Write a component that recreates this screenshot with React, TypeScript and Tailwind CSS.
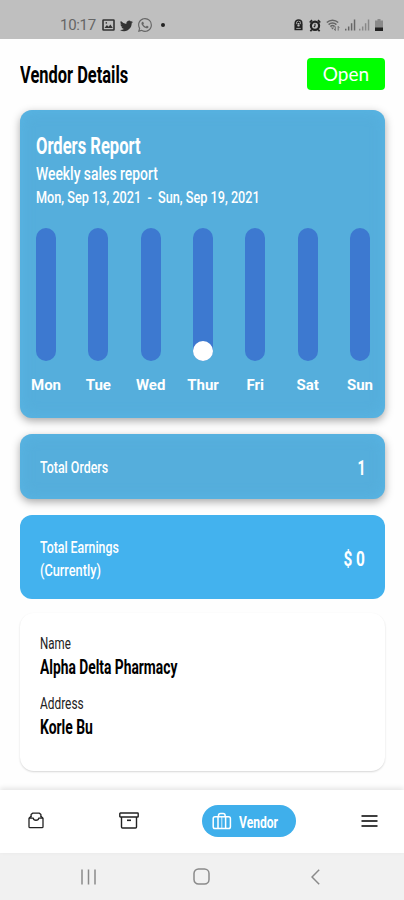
import type { ReactNode } from "react";
import { BsTwitter, BsWhatsapp } from "react-icons/bs";

const days = [
  { label: "Mon", orders: 0 },
  { label: "Tue", orders: 0 },
  { label: "Wed", orders: 0 },
  { label: "Thur", orders: 1 },
  { label: "Fri", orders: 0 },
  { label: "Sat", orders: 0 },
  { label: "Sun", orders: 0 },
];

// Roboto squeezed horizontally to get a narrow display face
function Narrow({ children, className }: { children: ReactNode; className: string }) {
  return <span className={`block w-max whitespace-pre ${className}`}>{children}</span>;
}

function SignalIcon({ className }: { className: string }) {
  return (
    <svg width="11" height="12" viewBox="0 0 12 12" className={className} fill="currentColor">
      <path d="M0 10h1.6v2H0zM3.2 7.5h1.6V12H3.2zM6.4 4H8v8H6.4zM9.6 0h1.6v12H9.6z" />
    </svg>
  );
}

function StatusBar() {
  return (
    <header className="flex h-[39px] items-center justify-between bg-[#bfbfbf] pt-[11px] pr-[21px] pl-[60px] text-[#333]">
      <div className="flex items-center">
        <span className="w-[42px] text-[15px] tracking-[-0.3px] text-[#666]">10:17</span>
        <svg width="13" height="12" viewBox="0 0 13 12" fill="none" stroke="currentColor">
          <rect x="1" y="1" width="11" height="10" rx="0.5" strokeWidth="1.6" />
          <path d="M2.5 9l2.4-3 1.7 1.8L8.4 5.5 10.8 9z" fill="currentColor" stroke="none" />
          <circle cx="4.3" cy="3.9" r="0.8" fill="currentColor" stroke="none" />
        </svg>
        <BsTwitter className="ml-[5px]" size={13} />
        <BsWhatsapp className="ml-[5px] text-[#666]" size={14} />
        <span className="ml-[9px] size-1 rounded-full bg-[#222]" />
      </div>
      <div className="flex items-center">
        <svg width="9" height="12" viewBox="0 0 10 13" fill="none" stroke="#222">
          <path d="M1.4 6V4.2a3.6 3.2 0 0 1 7.2 0V6" strokeWidth="1.7" />
          <path d="M0.5 5.5h9v6.8h-9z" fill="#222" stroke="none" />
          <path d="M3 4.8L5 3l2 1.8" strokeWidth="1.3" />
          <circle cx="5" cy="7" r="1.3" fill="#bfbfbf" stroke="none" />
          <path d="M2.5 10.3h5" stroke="#bfbfbf" strokeWidth="0.9" />
        </svg>
        <svg className="ml-1.5" width="12" height="13" viewBox="0 0 12 13" fill="none" stroke="#222">
          <circle cx="6" cy="6.8" r="4.1" strokeWidth="2.2" />
          <path d="M0.8 3.5L3 1.2M11.2 3.5L9 1.2M2.8 10.5l-1.4 1.7M9.2 10.5l1.4 1.7" strokeWidth="1.8" />
          <path d="M6 4.8v2.2L4.8 8" strokeWidth="1.1" />
        </svg>
        <svg className="ml-[5px]" width="14" height="12" viewBox="0 0 14 12" fill="none" stroke="#666">
          <path d="M0.8 3.5a8.2 8.2 0 0 1 11.4 0M2.6 5.6a5.6 5.6 0 0 1 7.8 0M4.4 7.6a3 3 0 0 1 4.2 0" strokeWidth="1.5" />
          <path d="M5 8.5h3L6.5 10.5z" fill="#666" stroke="none" />
          <path d="M9.3 11.6V7.4M8 9.8l1.3 1.6M12.2 11.6V7.4M13.3 8.8l-1.1-1.4" strokeWidth="0.9" />
        </svg>
        <SignalIcon className="ml-[5px] text-[#666]" />
        <SignalIcon className="ml-[3px] text-[#888]" />
        <svg className="ml-[5px]" width="8" height="12" viewBox="0 0 8 12">
          <path d="M2.5 0h3v1.5H8V12H0V1.5h2.5z" fill="#8a8a8a" />
          <path d="M0 8.5h8V12H0z" fill="#222" />
        </svg>
      </div>
    </header>
  );
}

function OrdersReport() {
  return (
    <section className="h-[308px] rounded-xl bg-[#55aedc] pr-[15px] pl-4 text-white shadow-[0_3px_8px_rgba(0,0,0,0.34),inset_0_0_14px_rgba(92,187,234,0.6)]">
      <div className="pt-[21px]">
        <Narrow className="origin-left scale-x-[0.69] text-[24px] leading-[30px] font-bold">Orders Report</Narrow>
        <Narrow className="origin-left scale-x-[0.73] text-[19px] leading-[25px] font-medium">Weekly sales report</Narrow>
        <Narrow className="origin-left scale-x-[0.745] text-[17px] leading-[23px] font-medium">
          Mon, Sep 13, 2021  -  Sun, Sep 19, 2021
        </Narrow>
      </div>
      <div className="mt-[19px] flex justify-between">
        {days.map((day) => (
          <div key={day.label} className="flex w-5 flex-col items-center">
            <div className="flex h-[133px] w-5 items-end rounded-full bg-[#3d79d0]">
              {day.orders > 0 && <span className="size-5 rounded-full bg-white" />}
            </div>
            <span className="mt-[13px] text-[15px] leading-[22px] font-bold">{day.label}</span>
          </div>
        ))}
      </div>
    </section>
  );
}

function VendorDetails() {
  return (
    <section className="mt-[14px] h-[158px] rounded-[14px] bg-white px-5 pt-[18px] text-black shadow-[0_1px_2px_rgba(0,0,0,0.16)]">
      <Narrow className="origin-left scale-x-[0.68] text-[17px] leading-[24px] text-[#222]">Name</Narrow>
      <Narrow className="origin-left scale-x-[0.69] text-[20px] leading-[24px] font-bold">Alpha Delta Pharmacy</Narrow>
      <Narrow className="mt-3 origin-left scale-x-[0.7] text-[17px] leading-[24px] text-[#222]">Address</Narrow>
      <Narrow className="origin-left scale-x-[0.695] text-[20px] leading-[24px] font-bold">Korle Bu</Narrow>
    </section>
  );
}

function TabBar() {
  return (
    <nav className="relative flex h-[63px] items-center bg-white pb-0.5 pl-7 text-black shadow-[0_-2px_5px_rgba(0,0,0,0.1)]">
      <svg width="16" height="17" viewBox="0 0 16 17" fill="none" stroke="#222" strokeWidth="1.3" strokeLinejoin="round">
        <path d="M3.1 5.5V2.6L4.6 1.2h6.8l1.5 1.4v2.9" />
        <path d="M3.1 4.2L1 6.2v8.5a1 1 0 0 0 1 1h12a1 1 0 0 0 1-1V6.2l-2.1-2" />
        <path d="M1 6.2h4.3c.3 2.7 5.1 2.7 5.4 0H15" />
      </svg>
      <svg className="ml-[75px]" width="20" height="17" viewBox="0 0 20 17" fill="none" stroke="#222" strokeWidth="1.4">
        <rect x="0.8" y="1" width="18.4" height="4" rx="0.6" />
        <path d="M2.5 5v10a1 1 0 0 0 1 1h13a1 1 0 0 0 1-1V5" />
        <path d="M8 8.3h4" strokeWidth="1.6" />
      </svg>
      <div className="ml-[63px] flex h-8 w-[94px] items-center rounded-full bg-[#3fafeb] pl-[10px] text-white">
        <svg width="20" height="18" viewBox="0 0 20 18" fill="none" stroke="currentColor" strokeWidth="1.5">
          <rect x="1.2" y="4.7" width="17.2" height="11.8" rx="1.8" />
          <path d="M6 16.5V4.7M13.6 16.5V4.7" />
          <path d="M6.5 4.7V3.4c0-1.1.8-2 2-2h2.6c1.200 0 2 .9 2 2v1.300" />
          <path d="M9.800 5v11.500" strokeWidth="0.8" />
        </svg>
        <Narrow className="mt-0.5 ml-[7px] origin-left scale-x-[0.71] text-[17px] leading-6 font-bold">Vendor</Narrow>
      </div>
      <svg className="ml-[65px]" width="17" height="14" viewBox="0 0 17 14" fill="none" stroke="currentColor" strokeWidth="1.5">
        <path d="M0.5 2h16M0.5 7h16M0.5 12h16" />
      </svg>
    </nav>
  );
}

function SystemNav() {
  return (
    <footer className="flex h-[47px] items-center bg-[#f1f1f1] pl-[81px]">
      <svg width="16" height="16" viewBox="0 0 16 16" stroke="#8a8a8a" strokeWidth="1.5">
        <path d="M1 0.5v15M7.5 0.5v15M14 0.5v15" />
      </svg>
      <svg className="ml-24" width="17" height="17" viewBox="0 0 17 17" fill="none" stroke="#8a8a8a" strokeWidth="1.5">
        <rect x="1" y="1" width="15" height="15" rx="4.5" />
      </svg>
      <svg className="ml-[101px]" width="9" height="16" viewBox="0 0 9 16" fill="none" stroke="#8a8a8a" strokeWidth="1.5">
        <path d="M8.2 0.8L1 8l7.2 7.2" />
      </svg>
    </footer>
  );
}

export default function App() {
  return (
    <div className="flex h-[900px] w-[404px] flex-col overflow-hidden bg-[#fefefe] font-['Roboto',sans-serif]">
      <StatusBar />
      <main className="flex-1 pr-[19px] pl-5">
        <div className="flex h-[71px] items-center justify-between">
          <Narrow className="origin-left scale-x-[0.715] pt-1 text-[23px] font-bold text-black">Vendor Details</Narrow>
          <button
            type="button"
            className="mb-0.5 h-8 w-[78px] rounded bg-[#00ff00] font-['Lato',sans-serif] text-[19px] leading-8 text-white"
          >
            Open
          </button>
        </div>
        <OrdersReport />
        <section className="mt-4 flex h-[65px] items-center justify-between rounded-xl bg-[#55aedc] px-5 pt-0.5 text-white shadow-[0_3px_8px_rgba(0,0,0,0.34),inset_0_0_14px_rgba(92,187,234,0.6)]">
          <Narrow className="origin-left scale-x-[0.73] text-[17px] font-medium">Total Orders</Narrow>
          <Narrow className="origin-right scale-x-[0.7] text-[20px] font-bold">1</Narrow>
        </section>
        <section className="mt-4 flex h-[84px] items-center justify-between rounded-xl bg-[#43b2ee] px-5 pt-[3px] text-white">
          <div className="text-[17px] leading-[23px] font-medium">
            <Narrow className="origin-left scale-x-[0.725]">Total Earnings</Narrow>
            <Narrow className="origin-left scale-x-[0.75]">(Currently)</Narrow>
          </div>
          <Narrow className="origin-right scale-x-[0.77] text-[20px] font-bold">$ 0</Narrow>
        </section>
        <VendorDetails />
      </main>
      <TabBar />
      <SystemNav />
    </div>
  );
}
